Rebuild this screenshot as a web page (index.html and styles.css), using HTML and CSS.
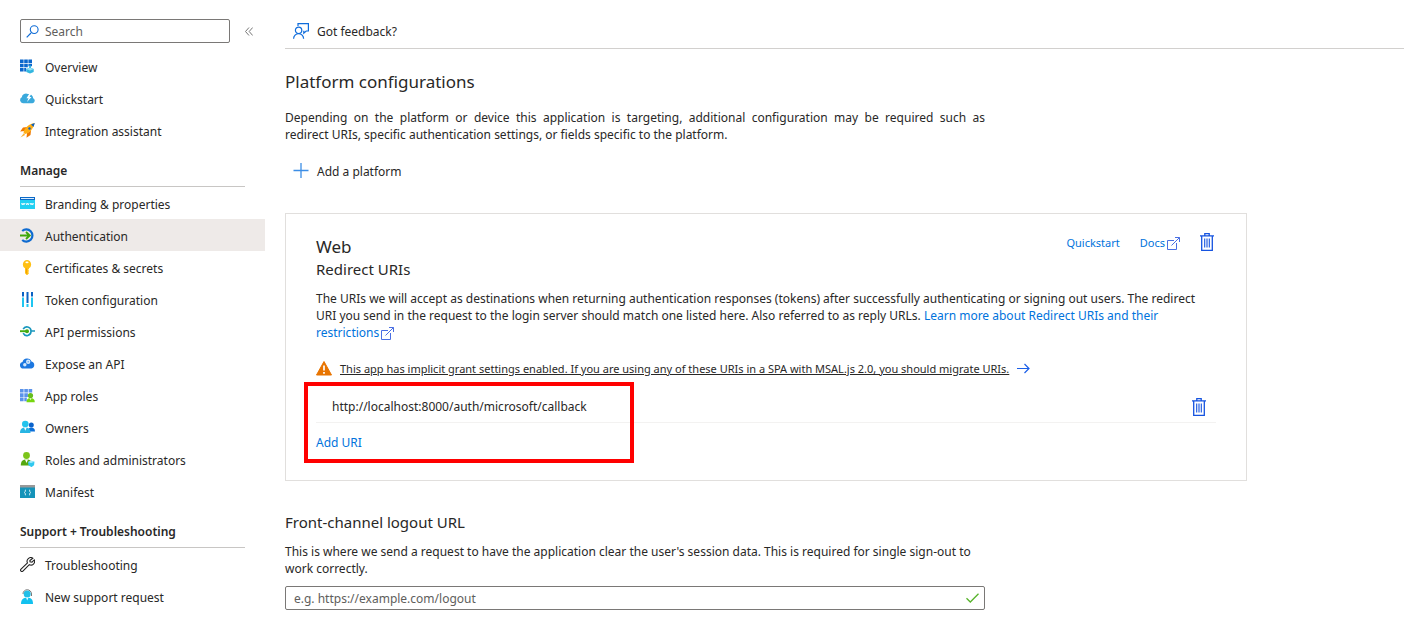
FILE: index.html
```html
<!DOCTYPE html>
<html lang="en">
<head>
    <meta charset="UTF-8">
    <meta name="viewport" content="width=device-width, initial-scale=1.0">
    <title>Authentication</title>
    <link rel="stylesheet" href="styles.css">
</head>
<body>
<!-- Shared icons -->
<svg class="sprite" aria-hidden="true">
    <symbol id="trash" viewBox="0 0 14 18">
        <path d="M0 2.800h14M4.800 2.500V.7h4.400v1.800M1.700 3v14.300h10.600V3" fill="none" stroke="#1553e0" stroke-width="1.300"/>
        <path d="M4.700 5.500v9M7 5.500v9M9.300 5.500v9" fill="none" stroke="#1553e0" stroke-width="1.100"/>
    </symbol>
    <symbol id="external" viewBox="0 0 13 13">
        <path d="M7 3.500H.5v9h9V6M4.500 8.500l8-8M8 .5h4.500V5" fill="none" stroke="#4a6fe3"/>
    </symbol>
</svg>

<!-- Sidebar -->
<nav class="sidebar">
    <div class="search-row">
        <label class="search-box">
            <svg width="13" height="13" viewBox="0 0 13 13"><path d="M5 8L.7 12.300" stroke="#0f6cd6" stroke-width="1.200"/><circle cx="8.200" cy="4.600" r="3.900" fill="none" stroke="#0f6cd6" stroke-width="1.100"/></svg>
            <input type="text" placeholder="Search" aria-label="Search">
        </label>
        <button class="collapse" type="button" aria-label="Collapse menu">
            <svg width="8" height="9" viewBox="0 0 8 9"><path d="M4 .5l-3.500 4 3.500 4M7.700 .5l-3.500 4 3.500 4" fill="none" stroke="#777"/></svg>
        </button>
    </div>
    <ul>
        <li><a href="#">
            <svg viewBox="0 0 15 15"><path d="M0 .5h3.600v3.600H0zM4.200 .5h3.600v3.600H4.200zM8.400 .5H12v3.600H8.400zM0 4.700h3.600v3.600H0zM4.200 4.700h3.600v3.600H4.200zM8.400 4.700H12v2.500H8.400zM0 8.900h3.600v3.600H0zM4.200 8.900h2v3.600h-2z" fill="#0b66cc"/><path d="M9.200 6.500h1.800v3H9.200z" fill="#32b6e0"/><path d="M6.300 10l3.700-1.500 3.700 1.500v3L10 14.500 6.300 13z" fill="#32b6e0"/><path d="M6.300 10l3.700 1.500 3.700-1.500L10 8.700z" fill="#9be0f5"/></svg>
            Overview</a></li>
        <li><a href="#">
            <svg viewBox="0 0 15 15"><path d="M3 12.300A3.200 3.200 0 0 1 1.800 6.300 4.200 4.200 0 0 1 8 3a4.500 4.500 0 0 1 5.200 4.200A2.700 2.700 0 0 1 12.500 12.300z" fill="#3aa9dc"/><path d="M10 1.500L6.500 7.300h2L7 11l4.500-5H9.500L11.800 2z" fill="#fff"/></svg>
            Quickstart</a></li>
        <li><a href="#">
            <svg viewBox="0 0 15 15"><path d="M4 10l-3.500 4.500L5 12z" fill="#f9b43a"/><path d="M7.500 4L3 4.500 .2 8.500l4.500-.5zM11 7.500l-.5 4.500-4 2.800.5-4.500z" fill="#ef7900"/><path d="M3.500 9.500c1-4.500 5-8.500 11-9.500-1 6-5 10-9.500 11z" fill="#ffae13"/><path d="M11 1.500L14.800 0 13.500 4z" fill="#0b62c4"/><circle cx="9.500" cy="5.500" r="1.200" fill="#0b62c4"/></svg>
            Integration assistant</a></li>
    </ul>

    <h3>Manage</h3>
    <ul>
        <li><a href="#">
            <svg viewBox="0 0 15 15"><path d="M0 1h15v3H0z" fill="#0b69c7"/><path d="M1 2h13v1H1z" fill="#d8edff"/><path d="M0 4h15v9H0z" fill="#22d0f2"/><path d="M1.500 7l.8 2 .8-2 .8 2 .8-2M5.900 7l.8 2 .8-2 .8 2 .8-2M10.300 7l.8 2 .8-2 .8 2 .8-2" fill="none" stroke="#fff" stroke-width=".8"/></svg>
            Branding &amp; properties</a></li>
        <li><a class="active" href="#">
            <svg viewBox="0 0 15 15"><path d="M2.200 3A6.100 6.100 0 1 1 2.200 12" fill="none" stroke="#0f6bd0" stroke-width="2.200"/><path d="M0 7.500h9M6 4l3.700 3.500L6 11" fill="none" stroke="#3fa80c" stroke-width="1.900"/></svg>
            Authentication</a></li>
        <li><a href="#">
            <svg viewBox="0 0 15 15"><path d="M7 0a4.500 4.500 0 0 0-2 8.300v5L7 15.300l2-2-.8-1.200.8-1.100-.8-1.200.8-1V8.300a4.500 4.500 0 0 0-2-8.300z" fill="#ffc014"/><path d="M6.200 8.500h.8v5h-.8z" fill="#f09a00"/><ellipse cx="7" cy="2.300" rx="1.600" ry=".9" fill="#fff"/></svg>
            Certificates &amp; secrets</a></li>
        <li><a href="#">
            <svg viewBox="0 0 15 15"><path d="M2 0h2v4.500H2zM6.500 0h2v11h-2zM11 0h2v4.500h-2z" fill="#0b62c4"/><path d="M2 5.500h2V15H2zM6.500 12h2v3h-2zM11 5.500h2V15h-2z" fill="#1fc6f1"/></svg>
            Token configuration</a></li>
        <li><a href="#">
            <svg viewBox="0 0 15 15"><path d="M3.200 5.200A4.100 4.100 0 0 1 11 7h4M3.200 9.200A4.100 4.100 0 0 0 11 7.300" fill="none" stroke="#1796bd" stroke-width="1.600"/><path d="M0 7.200h6" stroke="#44ab12" stroke-width="1.900"/><circle cx="7" cy="7.200" r="2" fill="#44ab12"/></svg>
            API permissions</a></li>
        <li><a href="#">
            <svg viewBox="0 0 15 15"><path d="M3.500 12.500A3.300 3.300 0 0 1 2.500 6 4.700 4.700 0 0 1 11.500 5.500 3.600 3.600 0 0 1 11.500 12.500z" fill="#1c77e0"/><circle cx="4.800" cy="8.700" r="1.700" fill="#d4e8fb"/><circle cx="8.200" cy="5.800" r="2.200" fill="#d4e8fb"/><circle cx="8.200" cy="5.800" r=".8" fill="#67a5ea"/></svg>
            Expose an API</a></li>
        <li><a href="#">
            <svg viewBox="0 0 15 15"><path d="M0 1h3.600v3.600H0zM4.300 1h3.600v3.600H4.300zM8.600 1h3.600v3.600H8.600zM0 5.300h3.600v3.600H0zM4.300 5.300h3.600v3.600H4.300zM0 9.600h3.600v3.600H0zM4.300 9.600h2.500v3.600H4.300z" fill="#5b93ea"/><circle cx="10.500" cy="7.500" r="2.600" fill="#66bd1c"/><path d="M6.500 14.300c0-3 1.500-4.300 4-4.300s4.300 1.300 4.300 4.300z" fill="#76d60e"/><path d="M9.500 10.300h2l-1 2z" fill="#eaffd8"/></svg>
            App roles</a></li>
        <li><a href="#">
            <svg viewBox="0 0 15 15"><circle cx="11.300" cy="5" r="2.500" fill="#0c63cb"/><path d="M8 11.500c0-3 1.300-4 3.300-4s3.700 1 3.700 4z" fill="#0c6fd9"/><circle cx="5.300" cy="4" r="3.300" fill="#23c3ec"/><path d="M0 13c0-4 2-5.500 5.300-5.500S10.500 9 10.500 13z" fill="#28b5e3"/><path d="M4 7.600h2.700l-1.400 3.200z" fill="#fff"/></svg>
            Owners</a></li>
        <li><a href="#">
            <svg viewBox="0 0 15 15"><circle cx="6.500" cy="3.500" r="3.400" fill="#7cc41a"/><path d="M.8 13.500c0-4.500 2-6 5.700-6s5.500 1.500 5.500 6z" fill="#55a80f"/><path d="M5 7.500h3l-1.500 3.500z" fill="#fff"/><path d="M8 10l3-1.300 3.500 1-.5 3.500-2.500 2-3-2z" fill="#30c8ef"/><path d="M8 10l3 1 3.500-1.300-3.500-1z" fill="#a5ecfb"/></svg>
            Roles and administrators</a></li>
        <li><a href="#">
            <svg viewBox="0 0 15 15"><path d="M0 1h15v3H0z" fill="#999"/><path d="M0 3.500h15V14H0z" fill="#1593b9"/><path d="M6 5.800c-1.300 0-.2 2-1.500 2.700 1.300.7.200 2.700 1.500 2.700M9 5.800c1.300 0 .2 2 1.500 2.700-1.300.7-.2 2.700-1.500 2.700" fill="none" stroke="#dff4fa"/></svg>
            Manifest</a></li>
    </ul>

    <h3>Support + Troubleshooting</h3>
    <ul>
        <li><a href="#">
            <svg viewBox="0 0 15 15"><path d="M12.800 1.200A3.700 3.700 0 0 0 7.500 6L1 12.200a1.300 1.300 0 0 0 1.900 1.900L9.300 7.700a3.700 3.700 0 0 0 5-4.800L12 5.200 10 4.700 9.900 3.600z" fill="none" stroke="#222" stroke-width="1.100"/></svg>
            Troubleshooting</a></li>
        <li><a href="#">
            <svg viewBox="0 0 15 15"><path d="M3 5a4.200 4.200 0 1 1 8.500 0v2" fill="none" stroke="#777"/><circle cx="7.200" cy="4.900" r="3.500" fill="#22bfe8"/><path d="M1 15c0-4.500 2-6.300 6.200-6.300S13 10.500 13 15z" fill="#12c1ef"/><path d="M6 8.500h2.500l-1.300 3z" fill="#e7faff"/></svg>
            New support request</a></li>
    </ul>
</nav>

<!-- Content -->
<main class="content">
    <div class="toolbar">
        <button class="command" type="button">
            <svg width="16" height="16" viewBox="0 0 16 16"><path d="M5 3V.6h10.400V8h-2.200l-2.400 2.200V7.800M.6 15.700a5 5 0 0 1 10 0" fill="none" stroke="#0f6cdb" stroke-width="1.200"/><circle cx="5.600" cy="7.300" r="3.200" fill="none" stroke="#0f6cdb" stroke-width="1.200"/></svg>
            Got feedback?
        </button>
    </div>

    <h1>Platform configurations</h1>
    <p class="intro">Depending on the platform or device this application is targeting, additional configuration may be required such as redirect&nbsp;URIs, specific authentication settings, or fields specific to the platform.</p>
    <button class="command add-platform" type="button">
        <svg width="16" height="16" viewBox="0 0 16 16"><path d="M.5 7.500h15M8 0v15" fill="none" stroke="#3c8ee6" stroke-width="1.300"/></svg>
        Add a platform
    </button>

    <section class="card">
        <div class="card-header">
            <div>
                <h2 class="platform">Web</h2>
                <h2 class="subtitle">Redirect URIs</h2>
            </div>
            <div class="card-actions">
                <a href="#">Quickstart</a>
                <a href="#">Docs<svg class="external" width="13" height="13"><use href="#external"/></svg></a>
                <button class="delete" type="button" aria-label="Delete platform"><svg width="14" height="18"><use href="#trash"/></svg></button>
            </div>
        </div>
        <p class="description">The URIs we will accept as destinations when returning authentication responses (tokens) after successfully authenticating or signing out users. The redirect URI you send in the request to the login server should match one listed here. Also referred to as reply URLs. <a href="#">Learn more about Redirect URIs and their restrictions<svg class="external" width="13" height="13"><use href="#external"/></svg></a></p>

        <div class="warning">
            <svg width="16" height="15" viewBox="0 0 16 15"><path d="M8 .5L15.500 14H.5z" fill="#e87400" stroke="#e87400" stroke-linejoin="round"/><path d="M8 4.500v5M8 11v1.800" stroke="#fff" stroke-width="1.700"/></svg>
            <a href="#">This app has implicit grant settings enabled. If you are using any of these URIs in a SPA with MSAL.js 2.0, you should migrate URIs.</a>
            <svg width="13" height="11" viewBox="0 0 13 11"><path d="M0 5.500h12M7.500 1L12 5.500 7.500 10" fill="none" stroke="#1b5fe8" stroke-width="1.200"/></svg>
        </div>

        <div class="uri-list">
            <div class="uri">
                <span>http://localhost:8000/auth/microsoft/callback</span>
                <button class="delete" type="button" aria-label="Delete URI"><svg width="14" height="18"><use href="#trash"/></svg></button>
            </div>
            <a class="add-uri" href="#">Add URI</a>
            <div class="highlight"></div>
        </div>
    </section>

    <h2><label for="logoutUrl">Front-channel logout URL</label></h2>
    <p class="logout-text">This is where we send a request to have the application clear the user's session data. This is required for single sign-out to work correctly.</p>
    <div class="logout-box">
        <input type="text" id="logoutUrl" placeholder="e.g. https://example.com/logout">
        <svg width="13" height="10" viewBox="0 0 13 10"><path d="M.5 5.200L4.300 9 12.500.7" fill="none" stroke="#57b32b" stroke-width="1.300"/></svg>
    </div>
</main>
</body>
</html>
```
FILE: styles.css
```css
* {
    box-sizing: border-box;
}

body {
    margin: 0;
    display: flex;
    background-color: #fff;
    color: #292827;
    font-family: "Segoe UI", "Noto Sans", sans-serif;
    font-size: 12px;
    line-height: 17px;
}

h1, h2, h3, p, ul {
    margin: 0;
    padding: 0;
}

h1, h2 {
    font-weight: normal;
}

a {
    color: #0073dc;
    text-decoration: none;
}

button {
    border: none;
    padding: 0;
    background: none;
    color: inherit;
    font: inherit;
    cursor: pointer;
}

input {
    flex: 1;
    min-width: 0;
    border: none;
    outline: none;
    padding: 0;
    background: none;
    font: inherit;
}

input::placeholder {
    color: #605e5c;
    opacity: 1;
}

.sprite {
    display: none;
}

/* Sidebar */
.sidebar {
    flex: none;
    width: 265px;
    padding-top: 19px;
}

.search-row {
    display: flex;
    align-items: center;
    gap: 15px;
    padding-left: 20px;
    margin-bottom: 7px;
}

.search-box {
    display: flex;
    align-items: center;
    gap: 6px;
    width: 210px;
    height: 24px;
    padding: 0 5px;
    border: 1px solid #7a7876;
    border-radius: 2px;
}

.collapse {
    display: flex;
}

.sidebar ul {
    list-style-type: none;
}

.sidebar li a {
    display: flex;
    align-items: center;
    gap: 10px;
    height: 32px;
    padding: 2px 20px 0;
    color: #292827;
}

.sidebar li svg {
    width: 15px;
    height: 15px;
    margin-bottom: 2px;
}

.sidebar li a.active {
    background-color: #eeeae8;
}

.sidebar h3 {
    height: 41px;
    margin: 0 20px;
    padding-top: 16px;
    border-bottom: 1px solid #c8c6c4;
    font-size: 12px;
    font-weight: 600;
}

/* Content */
.content {
    flex: 1;
    min-width: 0;
    padding-left: 20px;
}

.toolbar {
    display: flex;
    height: 49px;
    padding: 15px 8px 0;
    border-bottom: 1px solid #d2d0ce;
}

.command {
    display: flex;
    align-items: center;
    gap: 8px;
    height: 32px;
}

.content h1 {
    margin-top: 21px;
    font-size: 17px;
    line-height: 24px;
}

.content h2 {
    font-size: 15px;
    line-height: 22px;
}

.intro {
    max-width: 700px;
    margin-top: 15px;
    text-align: justify;
}

.add-platform {
    margin: 12px 8px 0;
}

.card {
    max-width: 962px;
    margin: 26px 20px 30px 0;
    padding: 19px 30px 29px;
    border: 1px solid #e1dfdd;
}

.card-header {
    display: flex;
    justify-content: space-between;
    align-items: flex-start;
}

.card .platform {
    font-size: 17px;
    line-height: 28px;
}

.card .subtitle {
    line-height: 16px;
}

.card-actions {
    display: flex;
    align-items: center;
    gap: 20px;
    padding-right: 2px;
    font-size: 11px;
}

.delete {
    display: flex;
}

.external {
    margin-left: 2px;
    vertical-align: -3px;
}

.description {
    margin-top: 13px;
}

.warning {
    display: flex;
    align-items: center;
    gap: 8px;
    margin-top: 19px;
    font-size: 11px;
}

.warning a {
    color: #292827;
    text-decoration: underline;
}

.warning svg {
    flex: none;
}

.uri-list {
    position: relative;
    margin-top: 14px;
}

.uri {
    display: flex;
    justify-content: space-between;
    align-items: center;
    height: 32px;
    padding: 0 10px 0 16px;
    border-bottom: 1px solid #f3f2f1;
}

.add-uri {
    display: inline-block;
    margin-top: 11px;
}

/* Callout around the redirect URI */
.highlight {
    position: absolute;
    top: -9px;
    left: -12px;
    width: 330px;
    height: 81px;
    border: 4px solid #f00;
    pointer-events: none;
}

.logout-text {
    max-width: 700px;
    margin-top: 10px;
}

.logout-box {
    display: flex;
    align-items: center;
    max-width: 700px;
    height: 24px;
    margin-top: 9px;
    padding: 0 5px 0 8px;
    border: 1px solid #7a7876;
    border-radius: 2px;
}
```
